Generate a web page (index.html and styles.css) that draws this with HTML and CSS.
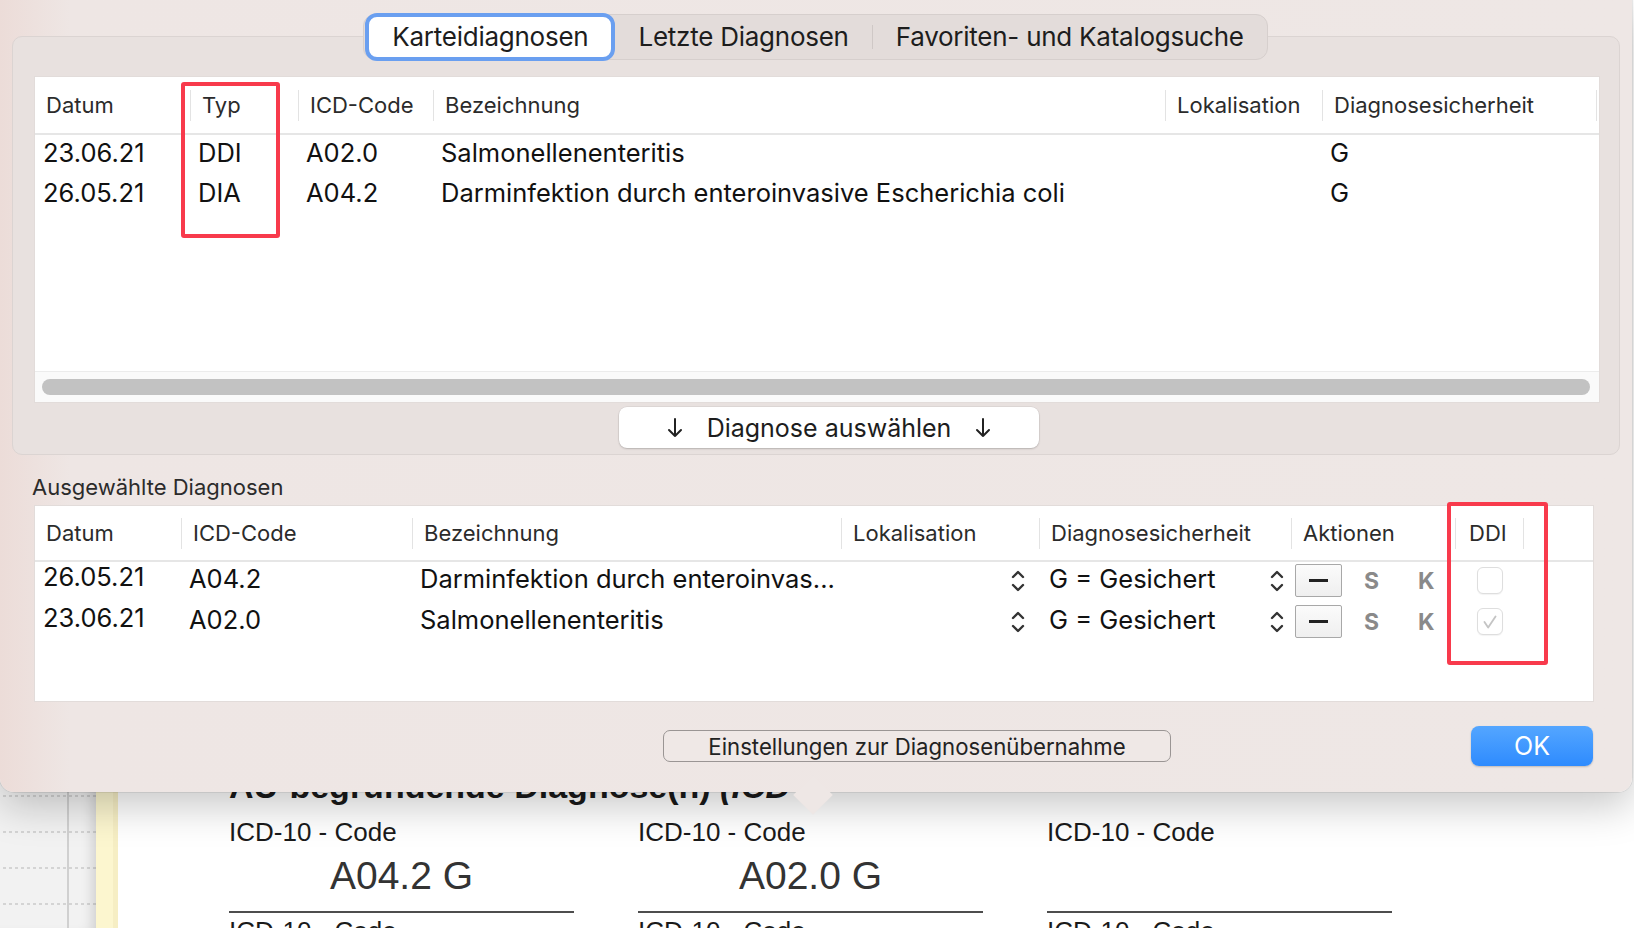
FILE: index.html
```html
<!DOCTYPE html>
<html lang="de">
<head>
    <meta charset="UTF-8">
    <title>Diagnosen übernehmen</title>
    <link rel="stylesheet" href="styles.css">
</head>
<body>
    <div class="desk">
        <aside class="sidebar"><div class="sidebar-rule"></div></aside>
        <div class="margin-strip"></div>
        <main class="doc">
            <h2 class="doc-title">AU-begründende Diagnose(n) <i>(ICD</i></h2>
            <div class="code-grid">
                <div class="code-field">
                    <div class="code-label">ICD-10 - Code</div>
                    <div class="code-value">A04.2 G</div>
                </div>
                <div class="code-field">
                    <div class="code-label">ICD-10 - Code</div>
                    <div class="code-value">A02.0 G</div>
                </div>
                <div class="code-field">
                    <div class="code-label">ICD-10 - Code</div>
                    <div class="code-value"></div>
                </div>
                <div class="code-label">ICD-10 - Code</div>
                <div class="code-label">ICD-10 - Code</div>
                <div class="code-label">ICD-10 - Code</div>
            </div>
        </main>
    </div>

    <section class="popover">
        <div class="tabview">
            <div class="segmented">
                <div class="seg-tab active">Karteidiagnosen</div>
                <div class="seg-tab">Letzte Diagnosen</div>
                <div class="seg-sep"></div>
                <div class="seg-tab">Favoriten- und Katalogsuche</div>
            </div>

            <div class="grid-table source-table">
                <div class="thead">
                    <div class="th first">Datum</div>
                    <div class="th">Typ</div>
                    <div class="th">ICD-Code</div>
                    <div class="th">Bezeichnung</div>
                    <div class="th">Lokalisation</div>
                    <div class="th last">Diagnosesicherheit</div>
                </div>
                <div class="tbody">
                    <div class="tr">
                        <div class="td">23.06.21</div>
                        <div class="td">DDI</div>
                        <div class="td">A02.0</div>
                        <div class="td">Salmonellenenteritis</div>
                        <div class="td"></div>
                        <div class="td">G</div>
                    </div>
                    <div class="tr">
                        <div class="td">26.05.21</div>
                        <div class="td">DIA</div>
                        <div class="td">A04.2</div>
                        <div class="td">Darminfektion durch enteroinvasive Escherichia coli</div>
                        <div class="td"></div>
                        <div class="td">G</div>
                    </div>
                </div>
                <div class="hscroll"><div class="hscroll-thumb"></div></div>
                <div class="highlight hl-typ"></div>
            </div>

            <button class="pick-btn">
                <svg class="down-arrow" viewBox="0 0 16 22"><path d="M8 2v17M2 13l6 6 6-6"/></svg>
                <span>Diagnose auswählen</span>
                <svg class="down-arrow" viewBox="0 0 16 22"><path d="M8 2v17M2 13l6 6 6-6"/></svg>
            </button>
        </div>

        <div class="picked">
            <div class="picked-label">Ausgewählte Diagnosen</div>
            <div class="grid-table picked-table">
                <div class="thead">
                    <div class="th first">Datum</div>
                    <div class="th">ICD-Code</div>
                    <div class="th">Bezeichnung</div>
                    <div class="th">Lokalisation</div>
                    <div class="th">Diagnosesicherheit</div>
                    <div class="th">Aktionen</div>
                    <div class="th last">DDI</div>
                </div>
                <div class="tbody">
                    <div class="tr">
                        <div class="td td-date">26.05.21</div>
                        <div class="td">A04.2</div>
                        <div class="td">Darminfektion durch enteroinvas...</div>
                        <div class="td td-stepper">
                            <svg class="stepper" viewBox="0 0 14 26"><path d="M2 9l5-5 5 5M2 17l5 5 5-5"/></svg>
                        </div>
                        <div class="td td-select">
                            <span>G = Gesichert</span>
                            <svg class="stepper" viewBox="0 0 14 26"><path d="M2 9l5-5 5 5M2 17l5 5 5-5"/></svg>
                        </div>
                        <div class="td td-actions">
                            <span class="minus-btn"><span class="minus-bar"></span></span>
                            <span class="act-letter">S</span>
                            <span class="act-letter">K</span>
                        </div>
                        <div class="td td-check"><span class="checkbox"></span></div>
                    </div>
                    <div class="tr">
                        <div class="td td-date">23.06.21</div>
                        <div class="td">A02.0</div>
                        <div class="td">Salmonellenenteritis</div>
                        <div class="td td-stepper">
                            <svg class="stepper" viewBox="0 0 14 26"><path d="M2 9l5-5 5 5M2 17l5 5 5-5"/></svg>
                        </div>
                        <div class="td td-select">
                            <span>G = Gesichert</span>
                            <svg class="stepper" viewBox="0 0 14 26"><path d="M2 9l5-5 5 5M2 17l5 5 5-5"/></svg>
                        </div>
                        <div class="td td-actions">
                            <span class="minus-btn"><span class="minus-bar"></span></span>
                            <span class="act-letter">S</span>
                            <span class="act-letter">K</span>
                        </div>
                        <div class="td td-check">
                            <span class="checkbox checked">
                                <svg viewBox="0 0 26 27"><path d="M7 14l4 6 8-12"/></svg>
                            </span>
                        </div>
                    </div>
                </div>
                <div class="highlight hl-ddi"></div>
            </div>
        </div>

        <div class="footer">
            <button class="settings-btn">Einstellungen zur Diagnosenübernahme</button>
            <button class="ok-btn">OK</button>
        </div>
    </section>
</body>
</html>
```

FILE: styles.css
```css
* {
    box-sizing: border-box;
}
html, body {
    margin: 0;
}
body {
    width: 1634px;
    height: 928px;
    overflow: hidden;
    position: relative;
    background: #fff;
    font-family: "Inter", "Liberation Sans", sans-serif;
    color: #1b1b1b;
}
button {
    font-family: inherit;
    color: inherit;
    margin: 0;
}

/* background document */
.desk {
    display: flex;
    height: 100%;
}
.sidebar {
    width: 96px;
    flex: none;
    background-color: #f2f2f2;
    background-image:
        linear-gradient(90deg, #f2f2f2 50%, transparent 50%),
        repeating-linear-gradient(to bottom, transparent 0 3px, #d4d4d4 3px 5px, transparent 5px 36px);
    background-size: 6px 100%, 100% 100%;
    box-shadow: inset -12px 0 14px -10px rgba(0, 0, 0, 0.18);
}
.sidebar-rule {
    margin-left: 67px;
    width: 2px;
    height: 100%;
    background: #d0d0d0;
}
.margin-strip {
    width: 22px;
    flex: none;
    background: #fcf6cf;
    border-right: 5px solid #f6eec4;
}
.doc {
    flex: 1;
    padding: 766px 0 0 111px;
    font-family: "Liberation Sans", Arial, sans-serif;
    color: #1a1a1a;
}
.doc-title {
    margin: 0;
    font-size: 34px;
    line-height: 40px;
    font-weight: bold;
}
.code-grid {
    display: grid;
    grid-template-columns: 345px 345px 345px;
    column-gap: 64px;
    margin-top: 11px;
}
.code-label {
    font-size: 26px;
    line-height: 30px;
}
.code-value {
    margin-top: 6px;
    height: 46px;
    font-size: 39px;
    line-height: 46px;
    text-align: center;
    color: #333;
}
.code-field {
    border-bottom: 2px solid #4d4d4d;
    padding-bottom: 12px;
    margin-bottom: 3px;
}

/* popover */
.popover {
    position: absolute;
    top: 0;
    left: 0;
    width: 1632px;
    height: 792px;
    padding: 0 12px;
    background: linear-gradient(90deg, #ecdcd8 0, #eee6e4 70px, #eee7e5 100%);
    border-radius: 0 0 14px 14px;
    box-shadow: 0 14px 40px rgba(0, 0, 0, 0.22), 0 0 0 1px rgba(0, 0, 0, 0.07);
    display: flex;
    flex-direction: column;
}
.popover::after {
    content: "";
    position: absolute;
    left: 799px;
    top: 781px;
    width: 28px;
    height: 28px;
    background: #eee7e5;
    transform: rotate(45deg);
}

.tabview {
    margin-top: 36px;
    height: 419px;
    background: #e8e1df;
    border: 1px solid #dbd4d2;
    border-radius: 10px;
    padding: 0 19px 0 21px;
    display: flex;
    flex-direction: column;
    align-items: center;
}
.segmented {
    margin-top: -23px;
    margin-left: -3px;
    height: 46px;
    display: flex;
    align-items: center;
    background: #e3dcda;
    border: 1px solid #d6cfcd;
    border-radius: 12px;
    font-size: 26px;
    letter-spacing: -0.25px;
    color: #1d1d1d;
}
.seg-tab {
    padding: 0 23px;
    line-height: 44px;
}
.seg-tab.active {
    margin-left: 1px;
    padding: 0 23px;
    height: 48px;
    line-height: 40px;
    background: #fff;
    border: 4px solid #6a9ff0;
    border-radius: 12px;
}
.seg-sep {
    width: 1px;
    height: 24px;
    background: #cfc8c6;
}

.grid-table {
    position: relative;
    align-self: stretch;
    background: #fff;
    border: 1px solid #e2dcda;
    display: flex;
    flex-direction: column;
}
.thead, .tr {
    display: grid;
}
.thead {
    height: 58px;
    align-items: center;
    border-bottom: 2px solid #e6e6e6;
    font-size: 22px;
    color: #2b2b2b;
}
.th {
    height: 31px;
    line-height: 31px;
    padding-left: 11px;
    border-left: 1px solid #e3e3e3;
    white-space: nowrap;
}
.th.first {
    border-left: none;
}
.th.last {
    border-right: 1px solid #e3e3e3;
}
.tbody {
    flex: 1;
    margin-top: -3px;
}
.tr {
    height: 40px;
    align-items: center;
    font-size: 25.5px;
    color: #111;
}
.td {
    padding-left: 8px;
    white-space: nowrap;
}

.source-table {
    margin-top: 16px;
    height: 327px;
}
.source-table .thead,
.source-table .tr {
    grid-template-columns: 155px 108px 135px 732px 157px 275px 1fr;
}
.hscroll {
    height: 31px;
    border-top: 1px solid #ececec;
    background: #fafafa;
    padding: 7px 9px 0 7px;
}
.hscroll-thumb {
    height: 16px;
    border-radius: 8px;
    background: #c2c2c2;
}

.highlight {
    position: absolute;
    border: 4px solid #f83a4c;
    border-radius: 3px;
}
.hl-typ {
    left: 146px;
    top: 5px;
    width: 99px;
    height: 156px;
}
.hl-ddi {
    left: 1412px;
    top: -4px;
    width: 101px;
    height: 163px;
}

.pick-btn {
    margin: 4px 0 0 24px;
    width: 420px;
    height: 41px;
    background: #fff;
    border: none;
    border-radius: 8px;
    box-shadow: 0 1px 2px rgba(0, 0, 0, 0.18), 0 0 0 0.5px rgba(0, 0, 0, 0.08);
    display: flex;
    align-items: center;
    justify-content: center;
    gap: 24px;
    font-size: 25px;
    color: #1d1d1d;
}
.down-arrow {
    width: 16px;
    height: 22px;
    fill: none;
    stroke: #222;
    stroke-width: 2;
    stroke-linecap: round;
    stroke-linejoin: round;
}

.picked {
    padding: 0 26px 0 20px;
}
.picked-label {
    margin-top: 19px;
    font-size: 22px;
    line-height: 26px;
    color: #2b2b2b;
}
.picked-table {
    margin: 5px 0 0 2px;
    height: 197px;
}
.picked-table .thead,
.picked-table .tr {
    grid-template-columns: 146px 231px 429px 198px 252px 164px 69px 1fr;
}
.picked-table .thead {
    height: 56px;
}
.picked-table .tbody {
    margin-top: -2px;
}
.picked-table .tr {
    height: 41px;
}
.picked-table .td {
    padding-bottom: 4px;
}
.picked-table .th.last {
    padding-left: 13px;
}
.picked-table .td-date {
    padding-bottom: 9px;
}
.picked-table .td-stepper,
.picked-table .td-actions,
.picked-table .td-check {
    padding-bottom: 0;
}
.td-stepper {
    display: flex;
    justify-content: flex-end;
    padding-right: 14px;
}
.td-select {
    display: flex;
    align-items: center;
    justify-content: space-between;
    padding: 0 7px 0 10px;
}
.stepper {
    width: 14px;
    height: 26px;
    fill: none;
    stroke: #333;
    stroke-width: 2.4;
    stroke-linecap: round;
    stroke-linejoin: round;
}
.td-select .stepper {
    margin-top: 4px;
}
.td-actions {
    display: flex;
    align-items: center;
    padding-left: 4px;
}
.minus-btn {
    width: 47px;
    height: 33px;
    border: 1.5px solid #a8a8a8;
    border-radius: 2px;
    background: linear-gradient(#fbfbfb, #efefef);
    display: flex;
    align-items: center;
    justify-content: center;
}
.minus-bar {
    width: 19px;
    height: 2.5px;
    background: #222;
}
.act-letter {
    font-size: 23px;
    font-weight: bold;
    color: #8a8a8a;
    margin-left: 22px;
}
.act-letter + .act-letter {
    margin-left: 39px;
}
.td-check {
    padding-left: 22px;
    display: flex;
}
.checkbox {
    width: 26px;
    height: 27px;
    border: 1px solid #dedede;
    border-radius: 6px;
    background: #fff;
    box-shadow: 0 1px 1px rgba(0, 0, 0, 0.05);
}
.checkbox svg {
    display: block;
    width: 24px;
    height: 25px;
    fill: none;
    stroke: #c4c4c4;
    stroke-width: 2;
    stroke-linecap: round;
    stroke-linejoin: round;
}

.footer {
    margin-top: 24px;
    height: 40px;
    display: flex;
    align-items: center;
    padding: 0 27px 0 651px;
}
.settings-btn {
    width: 508px;
    height: 32px;
    background: #efe8e6;
    border: 1.5px solid #9a9594;
    border-radius: 7px;
    font-size: 22.2px;
    color: #222;
    padding: 0;
}
.ok-btn {
    margin-left: auto;
    width: 122px;
    height: 40px;
    border: none;
    border-radius: 8px;
    background: linear-gradient(#54a6ff, #2e8bfe);
    box-shadow: 0 1px 2px rgba(0, 0, 0, 0.2);
    font-size: 25px;
    color: #fff;
}
```
